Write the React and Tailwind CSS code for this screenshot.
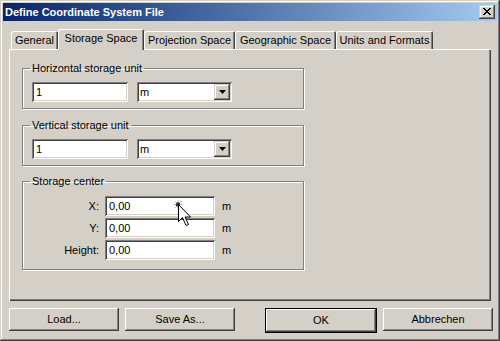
const raised = "shadow-[inset_-1px_-1px_0_#404040,inset_1px_1px_0_#fff,inset_-2px_-2px_0_#808080]";
const sunken = "shadow-[inset_1px_1px_0_#808080,inset_-1px_-1px_0_#fff,inset_2px_2px_0_#404040,inset_-2px_-2px_0_#d4d0c8]";
const comboBtn = "shadow-[inset_-1px_-1px_0_#404040,inset_1px_1px_0_#d4d0c8,inset_-2px_-2px_0_#808080,inset_2px_2px_0_#fff]";

const tabs = [
  { label: "General", w: "w-[47px]" },
  { label: "Storage Space", w: "w-[86px]", active: true },
  { label: "Projection Space", w: "w-[91px]" },
  { label: "Geographic Space", w: "w-[101px]" },
  { label: "Units and Formats", w: "w-[97px]" },
];

function TextBox({ className, value }) {
  return (
    <div className={`h-[20px] bg-white pl-[4px] flex items-center ${sunken} ${className}`}>{value}</div>
  );
}

function Combo() {
  return (
    <div className={`h-[20px] w-[95px] bg-white p-[2px] flex ${sunken}`}>
      <span className="flex-1 pl-[1px] flex items-center pt-[1px]">m</span>
      <div className={`w-[16px] h-[16px] bg-[#d4d0c8] flex items-center justify-center ${comboBtn}`}>
        <svg width="7" height="4" viewBox="0 0 7 4">
          <path d="M0 0h7L3.5 4z" fill="#000" />
        </svg>
      </div>
    </div>
  );
}

function UnitGroup({ title, className }) {
  return (
    <fieldset className={`w-[282px] border border-[#808080] pl-[7px] pb-[6px] shadow-[1px_1px_0_#fff,inset_1px_1px_0_#fff] ${className}`}>
      <legend className="px-[2px] leading-[13px]">{title}</legend>
      <div className="mt-[7px] ml-[2px] flex gap-[9px]">
        <TextBox className="w-[96px]" value="1" />
        <Combo />
      </div>
    </fieldset>
  );
}

function CenterGroup() {
  const rows = ["X:", "Y:", "Height:"];
  return (
    <fieldset className="mt-[9px] w-[282px] border border-[#808080] pl-[7px] pb-[9px] shadow-[1px_1px_0_#fff,inset_1px_1px_0_#fff]">
      <legend className="px-[2px] leading-[13px]">Storage center</legend>
      <div className="mt-[8px] flex flex-col gap-[2px]">
        {rows.map(r => (
          <div key={r} className="flex items-center">
            <span className="w-[69px] text-right">{r}</span>
            <TextBox className="ml-[6px] w-[110px]" value="0,00" />
            <span className="ml-[7px]">m</span>
          </div>
        ))}
      </div>
    </fieldset>
  );
}

function Btn({ className, children }) {
  return (
    <div className={`h-[23px] w-[110px] flex items-center justify-center bg-[#d4d0c8] ${raised} ${className}`}>{children}</div>
  );
}

export default function App() {
  return (
    <div className="relative w-[500px] h-[341px] bg-[#d4d0c8] p-[3px] text-[11px] leading-[13px] text-black font-['Liberation_Sans',Arial,sans-serif] select-none shadow-[inset_-1px_-1px_0_#404040,inset_1px_1px_0_#d4d0c8,inset_-2px_-2px_0_#808080,inset_2px_2px_0_#fff]">
      {/* title bar */}
      <div className="h-[18px] flex items-center pl-[2px] pr-[2px] bg-linear-to-r from-[#0a246a] to-[#a6caf0]">
        <span className="flex-1 text-white font-bold">Define Coordinate System File</span>
        <div className={`w-[16px] h-[14px] bg-[#d4d0c8] pl-[4px] pt-[3px] ${comboBtn}`}>
          <svg width="8" height="7" viewBox="0 0 8 7" shapeRendering="crispEdges">
            <path d="M0 0h2v1H0zM6 0h2v1H6zM1 1h2v1H1zM5 1h2v1H5zM2 2h4v1H2zM3 3h2v1H3zM2 4h4v1H2zM1 5h2v1H1zM5 5h2v1H5zM0 6h2v1H0zM6 6h2v1H6z" fill="#000" />
          </svg>
        </div>
      </div>

      <div className="ml-[6px] mt-[8px] w-[482px]">
        <div className="flex items-end h-[20px] pl-[2px]">
          {tabs.map(t => (
            <div
              key={t.label}
              className={`relative flex justify-center pt-[3px] bg-[#d4d0c8] rounded-t-[2px] shadow-[inset_1px_1px_0_#fff,inset_-1px_0_0_#404040,inset_-2px_0_0_#808080] ${t.w} ${t.active ? "h-[21px] -mb-[1px] z-10" : "h-[18px]"}`}
            >
              {t.label}
            </div>
          ))}
        </div>
        <div className="h-[252px] pt-[13px] pl-[13px] flex flex-col shadow-[inset_1px_1px_0_#fff,inset_-1px_-1px_0_#404040,inset_-2px_-2px_0_#808080]">
          <UnitGroup title="Horizontal storage unit" />
          <UnitGroup title="Vertical storage unit" className="mt-[10px]" />
          <CenterGroup />
        </div>
      </div>

      <div className="flex ml-[6px] mt-[7px]">
        <Btn>Load...</Btn>
        <Btn className="ml-[6px]">Save As...</Btn>
        <div className="ml-[30px] border border-black">
          <Btn className="w-[108px] h-[21px]">OK</Btn>
        </div>
        <Btn className="ml-[6px]">Abbrechen</Btn>
      </div>

      {/* mouse pointer over the X field */}
      <svg className="absolute left-[173px] top-[200px]" width="20" height="30" viewBox="0 0 20 30">
        <g stroke="#444" strokeWidth="0.6" opacity="0.6">
          <path d="M5 0v9M0.5 4.5h9M1.5 1l7 7M8.5 1l-7 7" />
        </g>
        <circle cx="5" cy="4.5" r="2.2" fill="#333" />
        <path d="M5.5 4.5v17l4-4 3.5 8 2.5-1-3.5-7.5h5.5z" fill="#fff" stroke="#000" strokeWidth="1" strokeLinejoin="miter" />
      </svg>
    </div>
  );
}
